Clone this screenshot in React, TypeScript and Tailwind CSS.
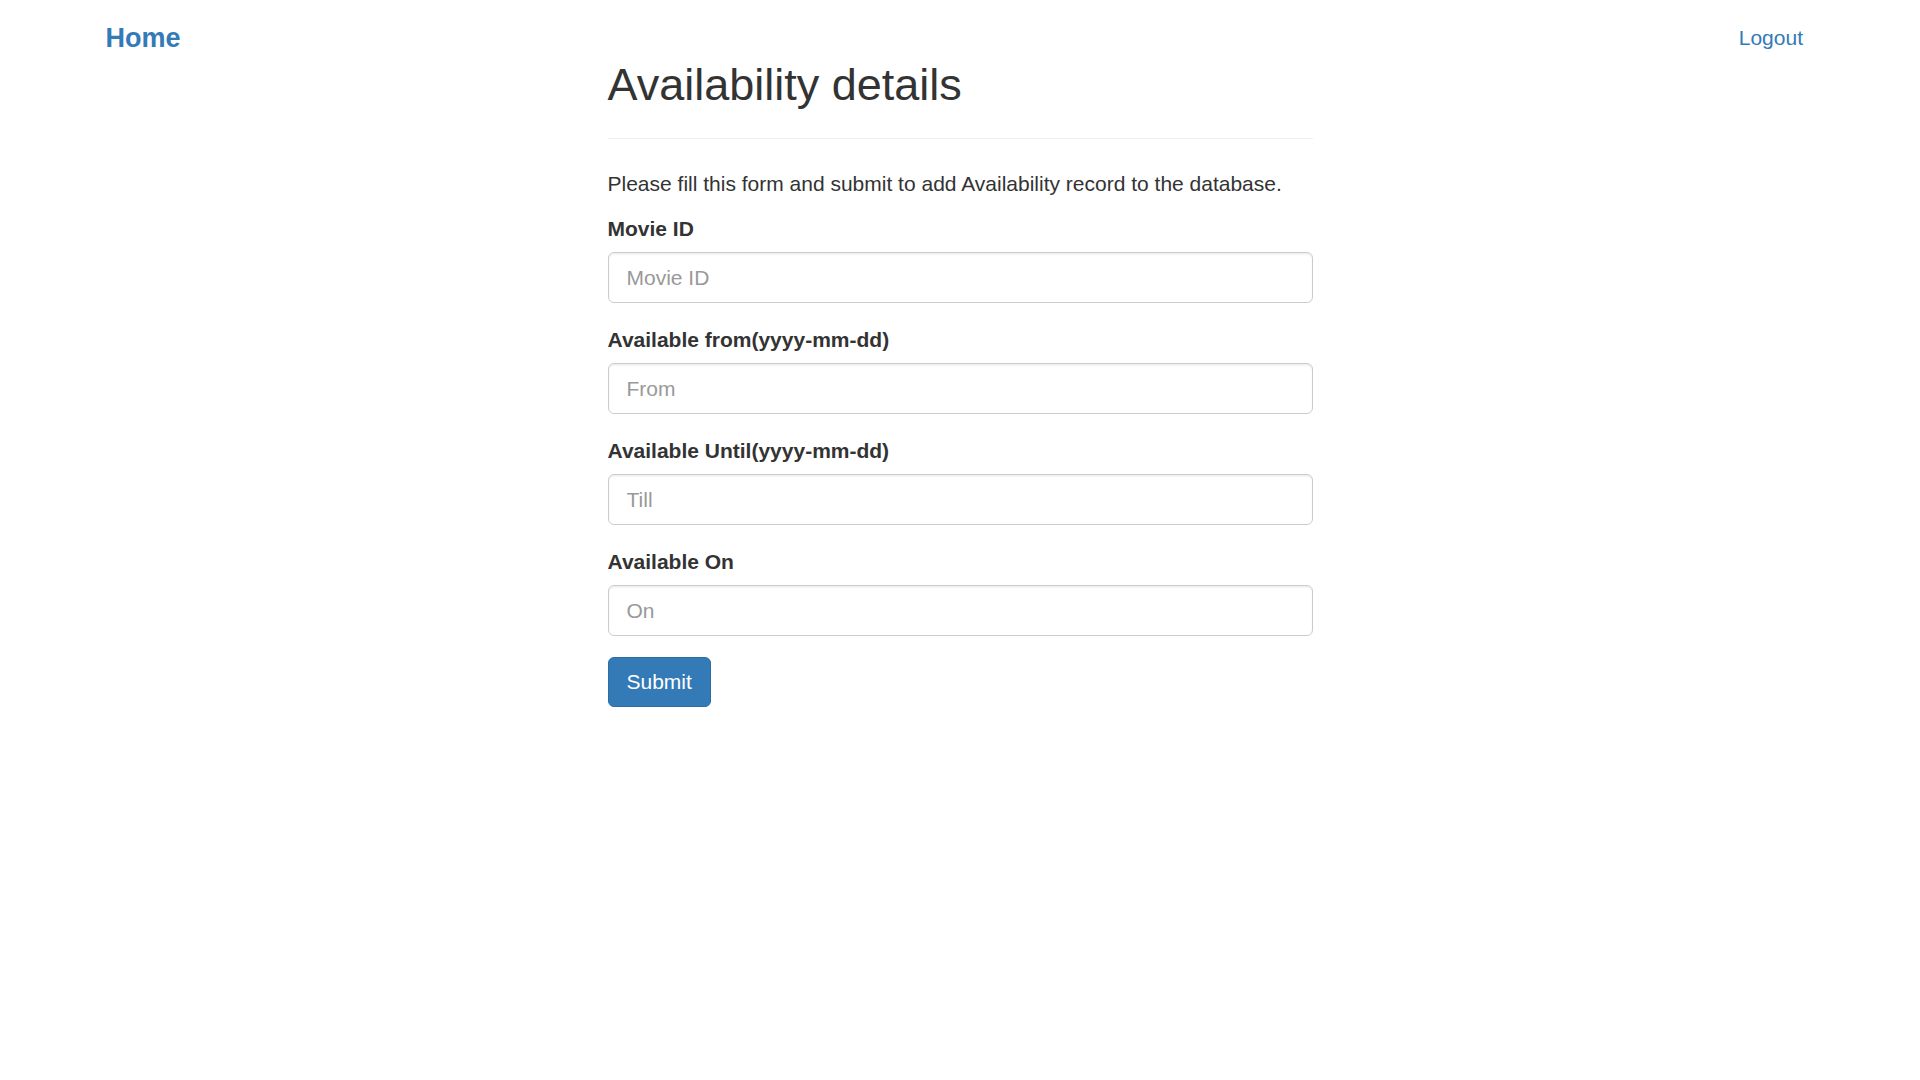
import React from "react";

const font = { fontFamily: '"Liberation Sans", Arial, Helvetica, sans-serif' };

function Field({ label, placeholder, last }: { label: string; placeholder: string; last?: boolean }) {
  return (
    <div className={last ? "mb-[21px]" : "mb-[22.5px]"}>
      <label className="block text-[21px] leading-[30px] font-bold text-[#333] mb-[7.5px] -mt-[1px] pb-[1px]">{label}</label>
      <input
        type="text"
        placeholder={placeholder}
        className="block w-full h-[51px] px-[18px] py-[9px] text-[21px] leading-[30px] text-[#555] bg-white border border-[#ccc] rounded-[6px] shadow-[inset_0_1.5px_1.5px_rgba(0,0,0,0.075)] placeholder:text-[#999] outline-none"
      />
    </div>
  );
}

export default function App() {
  return (
    <div className="min-h-screen bg-white text-[#333]" style={font}>
      <div className="flex justify-between items-start h-[53px] pt-[23px] pl-[105.5px] pr-[117px]">
        <a href="#" className="text-[27px] leading-[30px] font-bold text-[#337ab7]">Home</a>
        <a href="#" className="text-[21px] leading-[30px] text-[#337ab7]">Logout</a>
      </div>
      <div className="w-[705px] mx-auto">
        <div className="mt-[6.5px] pb-[13.5px] border-b border-[#eee] mb-[30px]">
          <h2 className="text-[45px] leading-[1.1] font-normal text-[#333] mb-[15px]">Availability details</h2>
        </div>
        <p className="text-[21px] leading-[30px] mb-[16px]">Please fill this form and submit to add Availability record to the database.</p>
        <form onSubmit={(e) => e.preventDefault()}>
          <Field label="Movie ID" placeholder="Movie ID" />
          <Field label="Available from(yyyy-mm-dd)" placeholder="From" />
          <Field label="Available Until(yyyy-mm-dd)" placeholder="Till" />
          <Field label="Available On" placeholder="On" last />
          <button
            type="submit"
            className="h-[50px] px-[18px] text-[21px] leading-[30px] text-white bg-[#337ab7] border border-[#2e6da4] rounded-[6px]"
          >
            Submit
          </button>
        </form>
      </div>
    </div>
  );
}
